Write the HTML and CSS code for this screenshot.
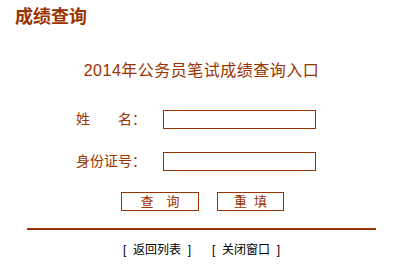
FILE: index.html
```html
<!DOCTYPE html>
<html lang="zh-CN">
  <head>
    <meta charset="UTF-8" />
    <title>成绩查询</title>
    <link rel="stylesheet" href="styles.css">
  </head>
  <body>
    <h1 class="title">成绩查询</h1>

    <div class="main">
      <h2 class="subtitle">2014年公务员笔试成绩查询入口</h2>

      <form class="query-form">
        <div class="form-row">
          <label class="form-label" for="name">姓　　名：</label>
          <input class="form-input" type="text" id="name" />
        </div>
        <div class="form-row">
          <label class="form-label" for="idcard">身份证号：</label>
          <input class="form-input" type="text" id="idcard" />
        </div>
        <div class="btn-row">
          <button class="btn btn-query" type="button">查　询</button>
          <button class="btn btn-reset" type="reset">重&nbsp;&nbsp;填</button>
        </div>
      </form>

      <hr class="divider" />

      <div class="footer-links">
        <a href="#">[&nbsp;&nbsp;返回列表&nbsp;&nbsp;]</a>
        <a href="#">[&nbsp;&nbsp;关闭窗口&nbsp;&nbsp;]</a>
      </div>
    </div>
  </body>
</html>
```

FILE: styles.css
```css
body {
  margin: 0;
  font-family: "Liberation Sans", "Noto Sans CJK SC", sans-serif;
  background-color: #fff;
  color: #993300;
}

.title {
  margin: 0;
  padding: 7px 0 0 15px;
  font-size: 18px;
  line-height: 20px;
  font-weight: bold;
  color: #993300;
}

.main {
  padding-left: 7px;
}

.subtitle {
  margin: 35px 0 0 0;
  text-align: center;
  font-size: 16px;
  line-height: 18px;
  font-weight: normal;
  letter-spacing: 0.5px;
  color: #993300;
}

.query-form {
  width: 240px;
  margin: 30px 0 0 69px;
}

.form-row {
  display: flex;
  align-items: center;
  height: 19px;
  margin-bottom: 23px;
}

.form-label {
  width: 87px;
  font-size: 14px;
  line-height: 19px;
  color: #993300;
}

.form-input {
  box-sizing: border-box;
  width: 153px;
  height: 19px;
  margin: 0;
  padding: 0 2px;
  border: 1px solid #993300;
  outline: none;
  font-size: 12px;
}

.btn-row {
  display: flex;
  justify-content: center;
  gap: 18px;
  margin-top: -2px;
  padding-left: 13px;
}

.btn {
  box-sizing: border-box;
  height: 19px;
  margin: 0;
  padding: 0;
  background-color: #fff;
  border: 1px solid #993300;
  color: #993300;
  font-family: "Liberation Sans", "Noto Sans CJK SC", sans-serif;
  font-size: 13px;
  line-height: 17px;
  cursor: pointer;
}

.btn-query {
  width: 78px;
}

.btn-reset {
  width: 67px;
}

.divider {
  width: 349px;
  height: 2px;
  margin: 17px auto 0 auto;
  border: none;
  background-color: #993300;
}

.footer-links {
  margin-top: 13px;
  display: flex;
  justify-content: center;
  gap: 21px;
  font-size: 12px;
  line-height: 14px;
}

.footer-links a {
  color: #000;
  text-decoration: none;
}
```
